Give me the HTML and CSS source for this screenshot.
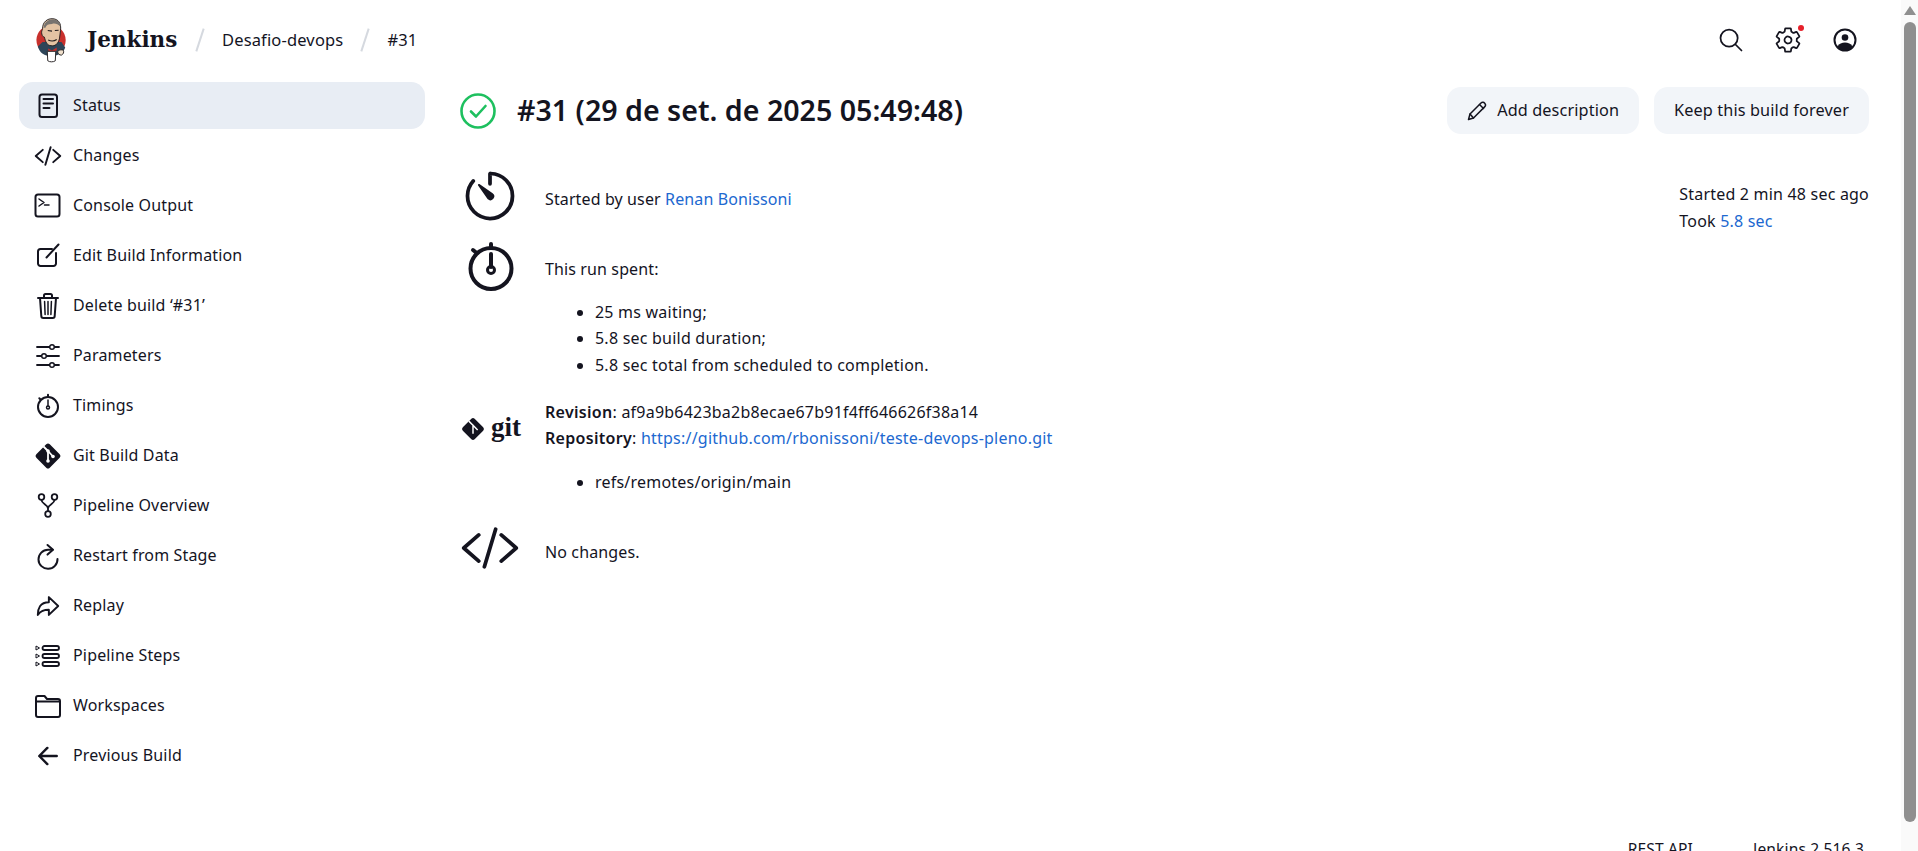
FILE: index.html
```html
<!DOCTYPE html>
<html lang="en">
<head>
<meta charset="utf-8">
<title>Desafio-devops #31 - Jenkins</title>
<link rel="stylesheet" href="styles.css">
</head>
<body>
<div class="page">
  <header class="topbar">
    <div class="crumbs">
      <svg class="logo" viewBox="0 0 36 48" aria-hidden="true">
        <circle cx="17" cy="24" r="15.500" fill="#c8302c"/>
        <path d="M3 31c2 7 7 10 14 10s13-3 15-9l-4-6H8z" fill="#2e4558"/>
        <path d="M8 12C8 5 13 1 19 1.500c6 .5 9 5 8 12.500l-1 8c-1 6-5 9-9 8-4 0-6-4-7-9-2 0-3-3-3-5 0-2 1-3 1-4z" fill="#e3c3a3" stroke="#231f20" stroke-width="1"/>
        <path d="M9 11c1-6 5-9 10-9 5 0 8 3 8 8-3-3-6-4-9-3-4 0-6 1-7 4z" fill="#77736f"/>
        <path d="M13.500 14l4.500 .6M21 14l4-.4M14 24c3 1.500 6 1.500 9-.5" stroke="#231f20" stroke-width="1.100" fill="none"/>
        <path d="M14 33l4 2 5-3v3l-5 2-4-2z" fill="#c8302c"/>
        <path d="M13 36h9l-.5 10c-2 1.500-6 1.500-8 0z" fill="#fff" stroke="#231f20" stroke-width="1"/>
        <path d="M24 36c2-2 5-2 6-1 1 2 0 4-2 5-2 0-4-1-4-4z" fill="#f0e0cc" stroke="#231f20" stroke-width="1"/>
      </svg>
      <span class="brand">Jenkins</span>
      <span class="slash"></span>
      <span class="crumb">Desafio-devops</span>
      <span class="slash"></span>
      <span class="crumb">#31</span>
    </div>
    <div class="tools">
      <svg class="tool" viewBox="0 0 512 512"><path class="s32" d="M221.09 64a157.090 157.090 0 10157.090 157.090A157.100 157.100 0 00221.090 64z"/><path class="s32" d="M338.290 338.290L448 448"/></svg>
      <span class="gear-wrap">
        <svg class="tool" viewBox="0 0 512 512"><path class="s32" d="M262.290 192.310a64 64 0 1057.400 57.400 64.130 64.130 0 00-57.400-57.400zM416.390 256a154.340 154.340 0 01-1.530 20.790l45.210 35.460a10.810 10.810 0 012.450 13.750l-42.770 74a10.810 10.810 0 01-13.140 4.590l-44.900-18.080a16.110 16.110 0 00-15.170 1.750A164.480 164.480 0 01325 400.800a15.940 15.940 0 00-8.820 12.140l-6.730 47.890a11.080 11.080 0 01-10.680 9.170h-85.540a11.110 11.110 0 01-10.690-8.870l-6.720-47.820a16.070 16.070 0 00-9-12.220 155.300 155.300 0 01-21.460-12.570 16 16 0 00-15.110-1.710l-44.890 18.070a10.810 10.810 0 01-13.140-4.580l-42.770-74a10.800 10.800 0 012.450-13.750l38.210-30a16.050 16.050 0 006-14.080c-.36-4.170-.58-8.330-.58-12.500s.21-8.270.58-12.350a16 16 0 00-6.070-13.940l-38.190-30A10.810 10.810 0 0149.480 186l42.770-74a10.810 10.810 0 0113.140-4.590l44.900 18.080a16.110 16.110 0 0015.170-1.750A164.480 164.480 0 01187 111.200a15.940 15.940 0 008.820-12.140l6.730-47.890A11.080 11.080 0 01213.230 42h85.540a11.110 11.110 0 0110.690 8.870l6.720 47.820a16.070 16.070 0 009 12.220 155.300 155.300 0 0121.460 12.570 16 16 0 0015.110 1.710l44.890-18.070a10.810 10.810 0 0113.140 4.580l42.770 74a10.800 10.800 0 01-2.450 13.750l-38.210 30a16.050 16.050 0 00-6.050 14.080c.33 4.140.55 8.300.55 12.470z"/></svg>
        <span class="dot"></span>
      </span>
      <svg class="tool" viewBox="0 0 28 28"><circle cx="14" cy="14" r="10.500" class="sk2"/><circle cx="14" cy="11.500" r="3.300" class="fill"/><path class="fill" d="M6.500 20.500C8 17.500 11 16.500 14 16.500s6 1 7.500 4C19.500 23.500 17 24.500 14 24.500s-5.500-1-7.500-4z"/></svg>
    </div>
  </header>

  <div class="columns">
    <nav class="side">
      <a class="item active"><svg class="ic" viewBox="0 0 32 32"><rect x="7.500" y="4.500" width="17.500" height="22.500" rx="2.500" class="sk2"/><path class="sk2" d="M11.500 9H21M11.500 13.500H21M11.500 18h6"/></svg><span>Status</span></a>
      <a class="item"><svg class="ic" viewBox="-37 -37 586 586"><path class="s36" d="M160 368L32 256l128-112M352 368l128-112-128-112M304 96l-96 320"/></svg><span>Changes</span></a>
      <a class="item"><svg class="ic" viewBox="0 0 32 32"><rect x="3.500" y="4.500" width="24" height="22" rx="2.500" class="sk2"/><path class="sk15" d="M7 9l5 3.500-5 3.500M12.500 15H17"/></svg><span>Console Output</span></a>
      <a class="item"><svg class="ic" viewBox="0 0 32 32"><path class="sk2" d="M20 9H8.500A2.500 2.500 0 006 11.500v12A2.500 2.500 0 008.500 26h13a2.500 2.500 0 002.500-2.500V13"/><path class="sk2" d="M14.500 17.500L26.500 4.500"/></svg><span>Edit Build Information</span></a>
      <a class="item"><svg class="ic" viewBox="0 0 32 32"><path class="sk2" d="M6 8h20M12 8V5.500A1.500 1.500 0 0113.500 4h5A1.500 1.500 0 0120 5.500V8"/><path class="sk2" d="M8 8l1.300 18a2 2 0 002 2h9.400a2 2 0 002-2L24 8"/><path class="sk15" d="M16 11.500v13M12.600 11.500l.5 13M19.400 11.500l-.5 13"/></svg><span>Delete build ‘#31’</span></a>
      <a class="item"><svg class="ic" viewBox="0 0 32 32"><path class="sk18" d="M5 7h12M23 7h4M5 16h4M15 16h12M5 25h12M23 25h4"/><circle cx="20" cy="7" r="2.300" class="sk15"/><circle cx="12" cy="16" r="2.300" class="sk15"/><circle cx="20" cy="25" r="2.300" class="sk15"/></svg><span>Parameters</span></a>
      <a class="item"><svg class="ic" viewBox="0 0 32 32"><circle cx="16" cy="17" r="10" class="sk2"/><path class="sk2" d="M16 6V4.800M8.500 9.500L7.300 8.300"/><path class="sk15" d="M16 10v6"/><circle cx="16" cy="17.500" r="1.500" class="sk15"/></svg><span>Timings</span></a>
      <a class="item"><svg class="ic" viewBox="0 0 32 32"><rect x="6.500" y="6.500" width="19" height="19" rx="2.500" class="fill" transform="rotate(45 16 16)"/><path d="M11.500 6.500l4.500 4.500M16 11v10M16 11l5 5.500" stroke="#fff" stroke-width="1.800" fill="none"/><circle cx="16" cy="11" r="1.800" fill="#fff"/><circle cx="16" cy="21" r="1.800" fill="#fff"/><circle cx="21" cy="16.500" r="1.800" fill="#fff"/></svg><span>Git Build Data</span></a>
      <a class="item"><svg class="ic" viewBox="0 0 32 32"><circle cx="9.500" cy="7" r="2.800" class="sk18"/><circle cx="22.500" cy="7" r="2.800" class="sk18"/><circle cx="16" cy="24" r="2.800" class="sk18"/><path class="sk18" d="M9.500 10c0 4 6.500 4.500 6.500 8.500v2.700M22.500 10c0 4-6.500 4.500-6.500 8.500"/></svg><span>Pipeline Overview</span></a>
      <a class="item"><svg class="ic" viewBox="0 0 32 32"><path class="sk2" d="M20.500 9.800H16A9.500 9.500 0 1025.500 19"/><path class="sk2" d="M15.500 5l5.500 4.800-5.500 4.800"/></svg><span>Restart from Stage</span></a>
      <a class="item"><svg class="ic" viewBox="-45 -45 602 602"><path class="s36" d="M448 256L272 88v96C103.570 184 64 304.770 64 424c48.610-62.240 91.600-96 208-96v96z"/></svg><span>Replay</span></a>
      <a class="item"><svg class="ic" viewBox="0 0 32 32"><rect x="10.500" y="6" width="16.500" height="4" rx="2" class="sk18"/><rect x="10.500" y="14" width="16.500" height="4" rx="2" class="sk18"/><rect x="10.500" y="22" width="16.500" height="4" rx="2" class="sk18"/><path class="sk1" d="M4 6l3.500 2L4 10zM4 14l3.500 2L4 18zM4 22l3.500 2L4 26z"/></svg><span>Pipeline Steps</span></a>
      <a class="item"><svg class="ic" viewBox="0 0 32 32"><path class="sk2" d="M4 25V8a2 2 0 012-2h6.500l2.500 3h11a2 2 0 012 2v14a2 2 0 01-2 2H6a2 2 0 01-2-2zM4 11.500h24"/></svg><span>Workspaces</span></a>
      <a class="item"><svg class="ic" viewBox="-30 -30 572 572"><path class="s44" d="M244 400L100 256l144-144M120 256h292"/></svg><span>Previous Build</span></a>
    </nav>

    <main class="main">
      <div class="titlebar">
        <div class="heading">
          <svg class="ok" viewBox="0 0 36 36"><circle cx="18" cy="18" r="16.500" class="okc"/><path class="okc" d="M11 18.500l5 5 9.500-10.500"/></svg>
          <h1>#31 (29 de set. de 2025 05:49:48)</h1>
        </div>
        <div class="actions">
          <a class="btn"><svg class="pen" viewBox="0 0 20 20"><path class="sk15" d="M1.500 18.500l1.500-5.500L14 2c1.200-1.200 2.800-.8 3.700.2.900 1 1.100 2.500-.1 3.700L6.500 17z"/><path class="sk15" d="M3 13l3.500 4M12.500 3.500l4 4"/></svg>Add description</a>
          <a class="btn">Keep this build forever</a>
        </div>
      </div>

      <section class="row row-started">
        <svg class="bigic" viewBox="0 0 512 512"><path class="s32" d="M112.910 128A191.850 191.850 0 0064 254c-1.180 106.350 85.650 193.800 192 194 106.200.2 192-85.830 192-192 0-104.540-83.550-189.610-187.500-192a4.360 4.360 0 00-4.500 4.370V152"/><path class="fill" d="M233.380 278.630l-79-113a8.130 8.130 0 0111.320-11.320l113 79a32.500 32.500 0 01-37.250 53.260 33.210 33.210 0 01-8.070-7.940z"/></svg>
        <p class="started">Started by user <a class="link">Renan Bonissoni</a></p>
        <div class="when">
          <div>Started 2 min 48 sec ago</div>
          <div>Took <a class="link">5.8 sec</a></div>
        </div>
      </section>

      <section class="row">
        <svg class="bigic" viewBox="0 0 60 60"><circle cx="31" cy="31.500" r="20.500" class="sk4"/><path class="sk4" d="M31 11V7M15.500 15l-2.500-2"/><path class="sk4" d="M31 17v13"/><circle cx="31" cy="33" r="3.500" class="sk3"/></svg>
        <div class="body body-run">
          <p class="lead">This run spent:</p>
          <ul>
            <li>25 ms waiting;</li>
            <li>5.8 sec build duration;</li>
            <li>5.8 sec total from scheduled to completion.</li>
          </ul>
        </div>
      </section>

      <section class="row row-git">
        <div class="gitmark">
          <svg class="gitdiamond" viewBox="0 0 28 28"><rect x="5" y="5" width="18" height="18" rx="2.500" class="fill" transform="rotate(45 14 14)"/><path d="M9.500 5.500L14 10v9M14 10l5 5" stroke="#fff" stroke-width="1.600" fill="none"/></svg>
          <span class="gittext">git</span>
        </div>
        <div class="body">
          <div><b>Revision</b>: af9a9b6423ba2b8ecae67b91f4ff646626f38a14</div>
          <div><b>Repository</b>: <a class="link">https://github.com/rbonissoni/teste-devops-pleno.git</a></div>
          <ul>
            <li>refs/remotes/origin/main</li>
          </ul>
        </div>
      </section>

      <section class="row row-changes">
        <svg class="codeic" viewBox="0 0 512 512"><path class="s32" d="M160 368L32 256l128-112M352 368l128-112-128-112M304 96l-96 320"/></svg>
        <p class="nochange">No changes.</p>
      </section>
    </main>
  </div>

  <footer class="foot">
    <a>REST API</a>
    <a>Jenkins 2.516.3</a>
  </footer>
</div>

<div class="scrollbar">
  <span class="arrow"></span>
  <span class="thumb"></span>
</div>
</body>
</html>
```
FILE: styles.css
```css
* { box-sizing: border-box; }
html, body { margin: 0; height: 100%; overflow: hidden; }
body {
  display: flex;
  font-family: "Noto Sans", sans-serif;
  font-size: 16px;
  letter-spacing: .12px;
  line-height: 26.67px;
  color: #14141f;
  background: #fff;
}
a { color: inherit; text-decoration: none; }
p { margin: 0; }
b { font-weight: 600; letter-spacing: .3px; }
.link { color: #2068d0; }

.page { flex: 1; min-width: 0; display: flex; flex-direction: column; }

.topbar {
  flex: none;
  height: 82px;
  padding: 0 32px 2px 35px;
  display: flex;
  align-items: center;
  justify-content: space-between;
}
.crumbs { display: flex; align-items: center; }
.logo { width: 34px; height: 46px; margin-right: 18px; }
.brand { font-family: "DejaVu Serif", serif; font-weight: 700; font-size: 21.500px; letter-spacing: 0; width: 91px; }
.slash {
  width: 2px; height: 24px; margin: 0 21px;
  background: #d5d9df;
  transform: rotate(18deg);
}
.crumb { font-size: 16.500px; letter-spacing: .15px; }
.tools { display: flex; align-items: center; gap: 29px; padding-right: 10px; }
.tool { width: 28px; height: 28px; display: block; }
.gear-wrap { position: relative; display: block; }
.dot {
  position: absolute; top: -1px; right: -2px;
  width: 6px; height: 6px; border-radius: 50%;
  background: #e6202a;
}

.s32 { fill: none; stroke: #14141f; stroke-width: 32; stroke-linecap: round; stroke-linejoin: round; }
.s36 { fill: none; stroke: #14141f; stroke-width: 36; stroke-linecap: round; stroke-linejoin: round; }
.s44 { fill: none; stroke: #14141f; stroke-width: 44; stroke-linecap: round; stroke-linejoin: round; }
.sk1 { fill: none; stroke: #14141f; stroke-width: 1; stroke-linejoin: round; }
.sk15 { fill: none; stroke: #14141f; stroke-width: 1.500; stroke-linecap: round; stroke-linejoin: round; }
.sk18 { fill: none; stroke: #14141f; stroke-width: 1.800; stroke-linecap: round; stroke-linejoin: round; }
.sk2 { fill: none; stroke: #14141f; stroke-width: 2; stroke-linecap: round; stroke-linejoin: round; }
.sk3 { fill: none; stroke: #14141f; stroke-width: 3; }
.sk4 { fill: none; stroke: #14141f; stroke-width: 4; stroke-linecap: round; }
.fill { fill: #14141f; }
.okc { fill: none; stroke: #1ec05f; stroke-width: 2.600; stroke-linecap: round; stroke-linejoin: round; }

.columns { flex: none; height: 754px; display: flex; padding-right: 32px; }
.side { flex: none; width: 406px; margin-left: 19px; letter-spacing: .16px; }
.item {
  height: 47px;
  margin-bottom: 3px;
  padding-left: 13px;
  display: flex;
  align-items: center;
  gap: 9px;
  border-radius: 14px;
}
.item.active { background: #e8edf4; }
.ic { width: 32px; height: 32px; flex: none; }

.main { flex: 1; min-width: 0; margin-left: 35px; }
.titlebar { height: 89px; padding-top: 5px; display: flex; justify-content: space-between; align-items: flex-start; }
.heading { display: flex; align-items: center; gap: 21px; height: 47px; }
.ok { width: 36px; height: 36px; }
h1 { margin: 0; font-size: 28.600px; letter-spacing: 0; font-weight: 600; line-height: 1.2; }
.actions { display: flex; gap: 15px; }
.btn {
  height: 47px;
  padding: 0 20px;
  display: flex; align-items: center; gap: 10px;
  background: #f2f5f9;
  border-radius: 14px;
  font-size: 16.250px;
  letter-spacing: .12px;
}
.pen { width: 20px; height: 20px; }

.row { display: flex; }
.bigic { flex: none; width: 60px; height: 60px; margin: -5px 25px 0 0; }
.row-started { height: 71px; }
.started { flex: 1; padding-top: 15px; }
.when { padding-top: 10px; letter-spacing: .2px; }
.body-run { padding-top: 14px; }
.lead { margin-bottom: 16px; }
ul { margin: 17px 0 0; padding-left: 50px; letter-spacing: .22px; }
.lead + ul { margin-top: 0; }
.row-git { margin-top: 20px; letter-spacing: .22px; }
.gitmark { flex: none; width: 85px; padding-top: 17px; display: flex; align-items: flex-start; gap: 5px; height: 50px; }
.gitdiamond { width: 26px; height: 26px; }
.gittext { font-family: "Liberation Serif", serif; font-weight: 700; font-size: 27px; letter-spacing: 0; line-height: 22px; }
.row-changes { margin-top: 22px; align-items: center; }
.codeic { flex: none; width: 60px; height: 60px; margin-right: 25px; }
.nochange { padding-top: 10px; }

.foot {
  flex: none;
  padding-right: 37px;
  display: flex;
  justify-content: flex-end;
  gap: 60px;
  font-size: 15.600px;
}

.scrollbar {
  flex: none;
  width: 17px;
  height: 100%;
  background: #fafafa;
  display: flex;
  flex-direction: column;
  align-items: center;
}
.arrow { width: 0; height: 0; border-left: 6px solid transparent; border-right: 6px solid transparent; margin: 6px 0 7px; border-bottom: 9px solid #8f8f8f; }
.thumb { width: 12px; height: 800px; background: #8f8f8f; border-radius: 6px; }
```
